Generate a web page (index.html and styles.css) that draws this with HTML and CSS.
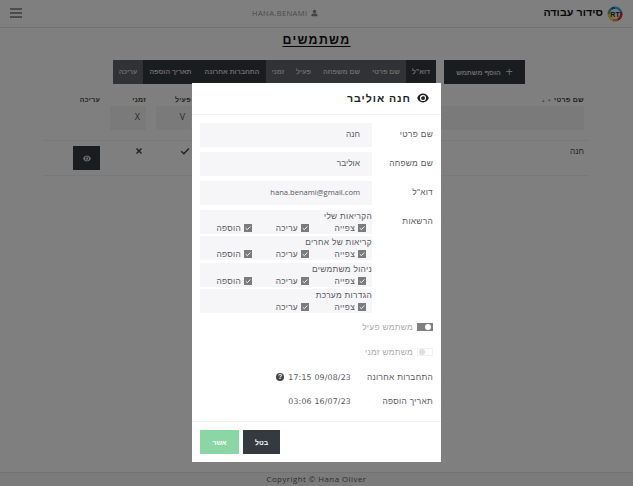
FILE: index.html
```html
<!DOCTYPE html>
<html lang="he" dir="rtl">
<head>
<meta charset="utf-8">
<title>סידור עבודה</title>
<link rel="stylesheet" href="styles.css">
</head>
<body>
<svg class="defs" aria-hidden="true">
  <symbol id="eye" viewBox="0 0 24 20"><path fill-rule="evenodd" d="M12 1C6.500 1 2.500 4.500.500 9.300v1.400C2.500 15.500 6.500 19 12 19s9.500-3.500 11.500-8.300V9.300C21.500 4.500 17.500 1 12 1zm0 2.800a6.200 6.200 0 1 1 0 12.400A6.200 6.200 0 0 1 12 3.800zM12 6q-.4 0-.8.1.4 2.600-3.100 3.100Q8 9.600 8 10a4 4 0 1 0 4-4z"/></symbol>
  <symbol id="check" viewBox="0 0 10 10"><path d="M1.300 5.300 3.900 7.800 8.900 2.500" fill="none" stroke="currentColor" stroke-width="1.500"/></symbol>
</svg>
<div class="page">
  <header class="topbar">
    <div class="brand">
      <svg class="logo" viewBox="0 0 16 16"><g fill="none" stroke-width="2.600"><path stroke="#1565d8" d="M4 3.200A6.200 6.200 0 0 1 8 1.800"/><path stroke="#27b6ec" d="M8 1.800a6.200 6.200 0 0 1 5.800 4"/><path stroke="#e02424" d="M13.800 5.800A6.200 6.200 0 0 1 10.500 13.700"/><path stroke="#f58a1f" d="M10.500 13.700a6.200 6.200 0 0 1-5-.1"/><path stroke="#f3d51f" d="M5.500 13.600A6.200 6.200 0 0 1 1.800 8"/><path stroke="#42b649" d="M1.800 8A6.200 6.200 0 0 1 4 3.200"/></g><circle cx="8" cy="8" r="4.900" fill="#eee"/><text x="8" y="10.500" text-anchor="middle" class="logo-text">RT</text></svg>
      <span class="brand-name">סידור עבודה</span>
    </div>
    <div class="user">
      <svg class="person" viewBox="0 0 8 8"><circle cx="4" cy="2.200" r="2"/><path d="M.5 7.600V6.500Q.5 4.700 2.500 4.700h3Q7.500 4.700 7.500 6.500v1.100z"/></svg>
      <span dir="ltr">HANA.BENAMI</span>
    </div>
    <div class="burger"><i></i><i></i><i></i></div>
  </header>
  <h1 class="title">משתמשים</h1>
  <div class="toolbar">
    <button class="add"><span class="plus">+</span>הוסף משתמש</button>
    <div class="toggles">
      <span class="seg seg-mail on">דוא"ל</span><span class="seg seg-first">שם פרטי</span><span class="seg seg-last">שם משפחה</span><span class="seg seg-active">פעיל</span><span class="seg seg-temp">זמני</span><span class="seg seg-login on">התחברות אחרונה</span><span class="seg seg-added on">תאריך הוספה</span><span class="seg seg-edit">עריכה</span>
    </div>
  </div>
  <div class="table">
    <div class="row head"><div class="name">שם פרטי <small>▾ ▴</small></div><div>פעיל</div><div>זמני</div><div>עריכה</div></div>
    <div class="row filters"><div class="filter"></div><div class="filter">V</div><div class="filter">X</div><div></div></div>
    <div class="row record"><div class="record-name">חנה</div><div class="mark"><svg viewBox="0 0 10 10"><use href="#check"/></svg></div><div class="mark cross"><svg viewBox="0 0 10 10"><path d="m2.500 2.500 5 5m0-5-5 5" stroke="currentColor" stroke-width="1.500"/></svg></div><div><button class="view"><svg viewBox="0 0 24 20"><use href="#eye"/></svg></button></div></div>
  </div>
  <footer class="copyright" dir="ltr">Copyright © Hana Oliver</footer>
</div>
<div class="backdrop">
  <section class="modal">
    <div class="modal-head"><svg class="eye" viewBox="0 0 24 20"><use href="#eye"/></svg><h2>חנה אוליבר</h2></div>
    <div class="modal-body">
      <div class="field"><label>שם פרטי</label><div class="input">חנה</div></div>
      <div class="field"><label>שם משפחה</label><div class="input">אוליבר</div></div>
      <div class="field"><label>דוא"ל</label><div class="input mail">hana.benami@gmail.com</div></div>
      <div class="field perms-field"><label>הרשאות</label>
        <div class="perms">
          <div class="perm"><div>הקריאות שלי</div><div class="checks"><span><b><svg viewBox="0 0 10 10"><use href="#check"/></svg></b>צפייה</span><span><b><svg viewBox="0 0 10 10"><use href="#check"/></svg></b>עריכה</span><span><b><svg viewBox="0 0 10 10"><use href="#check"/></svg></b>הוספה</span></div></div>
          <div class="perm"><div>קריאות של אחרים</div><div class="checks"><span><b><svg viewBox="0 0 10 10"><use href="#check"/></svg></b>צפייה</span><span><b><svg viewBox="0 0 10 10"><use href="#check"/></svg></b>עריכה</span><span><b><svg viewBox="0 0 10 10"><use href="#check"/></svg></b>הוספה</span></div></div>
          <div class="perm"><div>ניהול משתמשים</div><div class="checks"><span><b><svg viewBox="0 0 10 10"><use href="#check"/></svg></b>צפייה</span><span><b><svg viewBox="0 0 10 10"><use href="#check"/></svg></b>עריכה</span><span><b><svg viewBox="0 0 10 10"><use href="#check"/></svg></b>הוספה</span></div></div>
          <div class="perm"><div>הגדרות מערכת</div><div class="checks"><span><b><svg viewBox="0 0 10 10"><use href="#check"/></svg></b>צפייה</span><span><b><svg viewBox="0 0 10 10"><use href="#check"/></svg></b>עריכה</span></div></div>
        </div>
      </div>
      <div class="switch"><i class="track checked"></i>משתמש פעיל</div>
      <div class="switch temp"><i class="track"></i>משתמש זמני</div>
      <div class="info"><label>התחברות אחרונה</label><span dir="ltr">17:15 09/08/23</span><em>?</em></div>
      <div class="info"><label>תאריך הוספה</label><span dir="ltr">03:06 16/07/23</span></div>
    </div>
    <div class="modal-foot"><button class="btn cancel">בטל</button><button class="btn ok">אשר</button></div>
  </section>
</div>
</body>
</html>
```

FILE: styles.css
```css
* { box-sizing: border-box; }
html, body { height: 100%; }
body { margin: 0; overflow: hidden; background: #fff; color: #55595c; font-family: "Liberation Sans", sans-serif; font-size: 8.300px; }
button { border: 0; padding: 0; font: inherit; }
.defs { display: none; }
.page { height: 486px; display: flex; flex-direction: column; }
.topbar { height: 28px; flex: none; display: flex; align-items: center; justify-content: space-between; padding: 0 10px; border-bottom: 1px solid #e4e4e4; }
.brand { display: flex; align-items: center; gap: 4px; color: #111; font-size: 10.700px; font-weight: 700; }
.brand-name { line-height: 16px; margin-top: -3px; letter-spacing: .05px; }
.logo { width: 16px; height: 16px; }
.logo-text { font: 700 7px "Liberation Sans", sans-serif; fill: #223; }
.user { display: flex; align-items: center; gap: 4px; margin-left: 5px; margin-top: -1px; font-family: "Open Sans", sans-serif; font-size: 7.600px; letter-spacing: .35px; color: #999; }
.person { width: 7px; height: 8px; fill: #888; }
.burger { width: 12px; display: grid; gap: 2px; margin-top: -1px; }
.burger i { height: 2px; background: #999; }
.title { margin: 4px 0 0; height: 18px; line-height: 16px; font-size: 12.400px; font-weight: 700; text-align: center; letter-spacing: 1.300px; text-decoration: underline; text-decoration-thickness: 1px; text-underline-offset: 2px; color: #111; }
.toolbar { display: flex; gap: 8px; height: 24px; margin: 10px 108px 0 0; flex: none; }
.add { width: 81px; background: #343a40; color: #d5d5d5; font-size: 7px; font-weight: 700; display: flex; align-items: center; justify-content: center; gap: 5px; }
.plus { font-size: 12px; font-weight: 400; line-height: 12px; }
.toggles { display: flex; }
.seg { background: #62656a; color: #d5d5d5; font-size: 6.900px; font-weight: 700; line-height: 24px; text-align: center; white-space: nowrap; }
.on { background: #343a40; }
.seg-mail { width: 30px; }
.seg-first { width: 40px; }
.seg-last { width: 49px; }
.seg-active { width: 27px; }
.seg-temp { width: 24px; }
.seg-login { width: 68px; }
.seg-added { width: 55px; }
.seg-edit { width: 30px; }
.table { width: 546px; margin: 10px 44px 0 0; }
.row { display: grid; grid-template-columns: 383px 35px 36px 27px; column-gap: 10px; padding-right: 5px; }
.head { height: 12px; line-height: 11px; font-size: 7px; font-weight: 700; letter-spacing: .25px; color: #444; }
.head small { font-size: 5px; font-weight: 400; letter-spacing: 1px; color: #999; }
.filters { height: 34px; }
.filter { height: 24px; line-height: 22px; padding-right: 6px; font-family: "Open Sans", sans-serif; font-size: 9px; background: #f4f4f6; }
.record { height: 36px; padding-top: 6px; border: solid #f3f3f3; border-width: 1px 0; color: #444; }
.record-name { margin-top: -1px; }
.mark svg { display: block; width: 10px; height: 10px; margin-top: -1px; }
.mark:not(.cross) svg { margin-right: 1px; }
.cross { padding-right: 2px; }
.view { width: 27px; height: 24px; margin-top: -1px; background: #343a40; display: flex; align-items: center; justify-content: center; }
.view svg { width: 8px; height: 7px; fill: #ddd; }
.copyright { margin-top: auto; height: 14px; line-height: 12px; border-top: 1px solid #e4e4e4; text-align: center; letter-spacing: .5px; font-family: "Open Sans", sans-serif; font-size: 7.800px; background: #f7f7f7; }
.backdrop { position: fixed; inset: 0; padding: 83px 192px 0 0; background: rgba(0,0,0,.5); }
.modal { width: 249px; height: 379px; background: #fff; display: flex; flex-direction: column; letter-spacing: .3px; }
.modal-head { height: 32px; flex: none; display: flex; align-items: center; gap: 6px; padding: 0 12px; border-bottom: 1px solid #f2f2f2; }
.eye { width: 12px; height: 10px; margin-top: -1px; fill: #222; }
.modal h2 { margin: -2px 0 0; font-size: 10.600px; letter-spacing: .950px; color: #222; font-weight: 700; }
.modal-body { padding: 8px 8px 0; flex: 1; }
.field { display: flex; margin-bottom: 5px; }
.field label { width: 61px; line-height: 23px; }
.input { width: 172px; height: 24px; line-height: 23px; padding-right: 12px; background: #f6f6f9; letter-spacing: 0; }
.mail { font-family: "Open Sans", sans-serif; font-size: 7.600px; }
.perms { width: 172px; display: grid; gap: 2.400px; }
.perm { height: 24px; line-height: 12px; background: #f6f6f9; }
.checks { display: grid; grid-template-columns: 57px 57px 52px; padding-right: 6px; }
.checks span { display: flex; align-items: center; gap: 3px; }
.checks b { width: 8px; height: 8px; background: #7b7b7d; color: #fff; display: grid; place-items: center; }
.checks svg { width: 6px; height: 6px; }
.switch { height: 16px; display: flex; align-items: center; gap: 4px; margin-top: 6px; color: #aaa; }
.temp { margin-top: 9px; }
.track { width: 16px; height: 8px; border: 1px solid #f2f2f2; padding: 0 1px; display: flex; align-items: center; justify-content: flex-end; }
.track::before { content: ""; width: 6px; height: 6px; border-radius: 50%; background: #ddd; }
.checked { justify-content: flex-start; background: #808080; border-color: #808080; }
.checked::before { background: #fff; }
.info { display: flex; align-items: center; height: 24px; }
.switch + .info { margin-top: 5px; }
.info label { width: 82px; }
.info span { font-family: "DejaVu Sans", sans-serif; font-size: 7.800px; letter-spacing: .2px; }
.info em { width: 8px; height: 8px; margin-right: 4px; border-radius: 50%; background: #444; color: #fff; font: 700 7px/8px "Liberation Sans", sans-serif; text-align: center; letter-spacing: 0; }
.modal-foot { height: 41px; border-top: 1px solid #f2f2f2; padding: 8px; display: flex; justify-content: flex-end; gap: 4px; }
.btn { height: 24px; font-size: 6.900px; font-weight: 700; color: #fff; }
.cancel { width: 37px; background: #343a40; }
.ok { width: 39px; background: #8bd6a5; }
```
